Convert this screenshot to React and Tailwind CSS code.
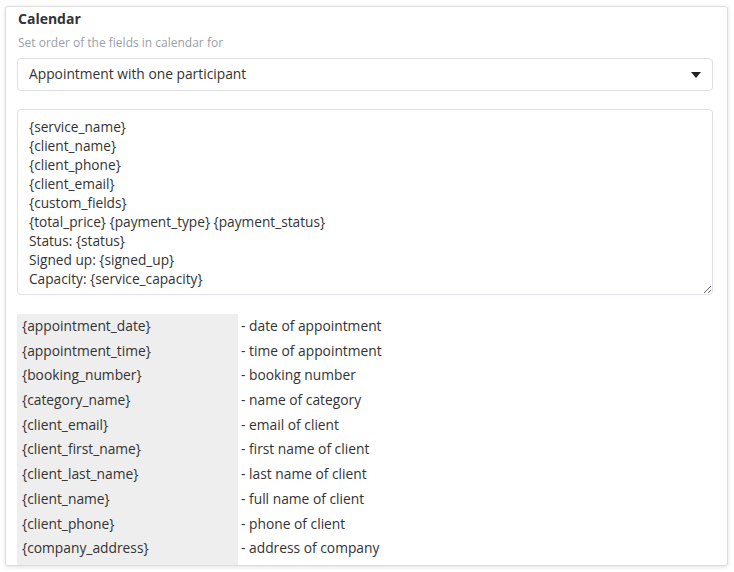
import React from 'react';

const TEMPLATE = [
  '{service_name}',
  '{client_name}',
  '{client_phone}',
  '{client_email}',
  '{custom_fields}',
  '{total_price} {payment_type} {payment_status}',
  'Status: {status}',
  'Signed up: {signed_up}',
  'Capacity: {service_capacity}',
].join('\n');

const VARS = [
  ['{appointment_date}', '- date of appointment'],
  ['{appointment_time}', '- time of appointment'],
  ['{booking_number}', '- booking number'],
  ['{category_name}', '- name of category'],
  ['{client_email}', '- email of client'],
  ['{client_first_name}', '- first name of client'],
  ['{client_last_name}', '- last name of client'],
  ['{client_name}', '- full name of client'],
  ['{client_phone}', '- phone of client'],
  ['{company_address}', '- address of company'],
];

export default function App() {
  return (
    <div className="w-[734px] h-[572px] bg-white pl-[5px] pt-[6px] overflow-hidden"
      style={{ fontFamily: '"Open Sans", "Liberation Sans", sans-serif' }}>
      <div className="w-[723px] h-[560px] bg-white border border-[#dcdcdc] rounded-[3px] shadow-[0_1px_4px_rgba(0,0,0,0.12)] overflow-hidden px-[11px] pt-[2px]">
        {/* Header */}
        <h2 className="text-[14px] font-bold leading-[20px] text-[#333] pl-px">Calendar</h2>
        <p className="text-[12px] leading-[16px] mt-[6px] text-[#9a9fa6] pl-px">Set order of the fields in calendar for</p>

        {/* Select */}
        <div className="mt-[7px] w-[696px] h-[33px] border border-[#dde1e6] rounded-[4px] flex items-center justify-between pl-[11px] pr-[11px]">
          <span className="text-[13.8px] text-[#333]">Appointment with one participant</span>
          <svg width="10" height="6" viewBox="0 0 10 6"><path d="M0 0h10L5 6z" fill="#222" /></svg>
        </div>

        {/* Template */}
        <textarea
          readOnly
          defaultValue={TEMPLATE}
          className="block mt-[18px] w-[696px] h-[186px] border border-[#dde1e6] rounded-[4px] px-[11px] pt-[7px] text-[13.7px] leading-[19px] text-[#333] outline-none resize-y"
          style={{ fontFamily: '"Open Sans", "Liberation Sans", sans-serif' }}
        />

        {/* Variables */}
        <div className="mt-[19px] grid grid-cols-[221px_1fr]">
          {VARS.map(([k, v]) => (
            <React.Fragment key={k}>
              <div className="bg-[#eeeeee] pl-[5px] h-[24.7px] flex items-center text-[13.8px] text-[#333]">{k}</div>
              <div className="pl-[3px] h-[24.7px] flex items-center text-[13.8px] text-[#333]">{v}</div>
            </React.Fragment>
          ))}
          <div className="bg-[#eeeeee] h-[24.7px]" />
          <div className="h-[24.7px]" />
        </div>
      </div>
    </div>
  );
}
